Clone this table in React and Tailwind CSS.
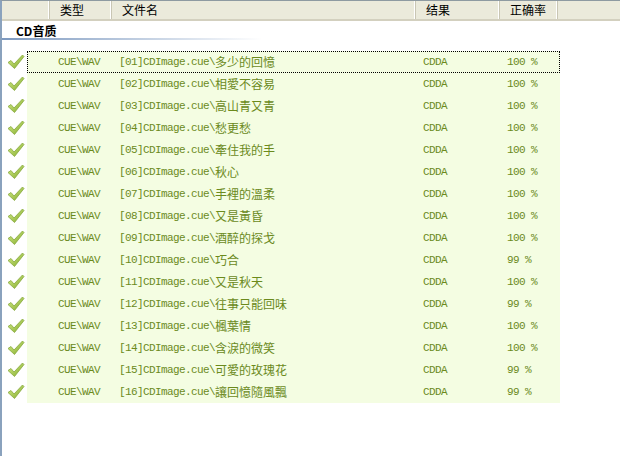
import React from "react";

const rows = [
  ["01", "多少的回憶", "100 %"],
  ["02", "相愛不容易", "100 %"],
  ["03", "高山青又青", "100 %"],
  ["04", "愁更愁", "100 %"],
  ["05", "牽住我的手", "100 %"],
  ["06", "秋心", "100 %"],
  ["07", "手裡的溫柔", "100 %"],
  ["08", "又是黃昏", "100 %"],
  ["09", "酒醉的探戈", "100 %"],
  ["10", "巧合", "99 %"],
  ["11", "又是秋天", "100 %"],
  ["12", "往事只能回味", "99 %"],
  ["13", "楓葉情", "100 %"],
  ["14", "含淚的微笑", "100 %"],
  ["15", "可愛的玫瑰花", "99 %"],
  ["16", "讓回憶隨風飄", "99 %"],
];

const mono = { fontFamily: '"Liberation Mono", monospace' };

const Check = () => (
  <svg width="18" height="16" viewBox="0 0 18 16">
    <defs>
      <linearGradient id="ck" x1="0" y1="0" x2="1" y2="1">
        <stop offset="0" stopColor="#d8ef8a" />
        <stop offset="1" stopColor="#7fa82a" />
      </linearGradient>
    </defs>
    <path
      d="M1 8.5 L4 6.5 L7 10 L15.5 1 L17 2.5 L7.5 14.5 Z"
      fill="url(#ck)"
      stroke="#86a83c"
      strokeWidth="0.8"
      strokeLinejoin="round"
    />
  </svg>
);

const HeadCell = ({ w, children }) => (
  <div
    className={`${w} h-full flex items-center pl-[10px] border-r border-r-[#c9c6b4] shadow-[inset_-1px_0_0_#ffffff]`}
  >
    {children}
  </div>
);

export default function App() {
  return (
    <div
      className="w-[620px] h-[456px] bg-white border-l-2 border-l-[#8aa2bd] border-t border-t-[#8e9aa1] overflow-hidden"
      style={{ fontFamily: '"Noto Sans CJK SC", "Liberation Sans", sans-serif' }}
    >
      <div className="h-[20px] flex bg-[#ebeadb] border-b-2 border-b-[#d3d0bf] text-[12px] text-black">
        <HeadCell w="w-[48px]"></HeadCell>
        <HeadCell w="w-[62px]">类型</HeadCell>
        <HeadCell w="w-[304px]">文件名</HeadCell>
        <HeadCell w="w-[84px]">结果</HeadCell>
        <HeadCell w="w-[58px]">正确率</HeadCell>
      </div>

      <div className="pl-[14px] pt-[2px] h-[16px] text-[12px] font-bold text-black leading-[16px]">
        CD音质
      </div>
      <div className="mt-[1px] h-[2px] w-[260px] bg-gradient-to-r from-[#7d99bf] to-white" />

      <div className="mt-[11px]">
        {rows.map(([n, name, pct], i) => (
          <div key={n} className="h-[22px] flex items-center">
            <div className="w-[25px] shrink-0 flex justify-center pl-[2px]">
              <Check />
            </div>
            <div
              className={`w-[533px] h-full flex items-center bg-[#f4fde2] text-[#6b8a1c] ${
                i === 0 ? "outline outline-1 outline-dotted outline-black -outline-offset-1" : ""
              }`}
            >
              <div className="w-[92px] shrink-0 pl-[31px] text-[11px] tracking-[-0.6px] whitespace-nowrap" style={mono}>
                CUE\WAV
              </div>
              <div className="w-[304px] shrink-0 text-[12px] whitespace-nowrap flex items-center">
                <span className="text-[11px] tracking-[-0.6px]" style={mono}>
                  [{n}]CDImage.cue\
                </span>
                <span>{name}</span>
              </div>
              <div className="w-[84px] shrink-0 text-[11px] tracking-[-0.6px]" style={mono}>
                CDDA
              </div>
              <div className="text-[11px] tracking-[-0.6px] whitespace-nowrap" style={mono}>
                {pct}
              </div>
            </div>
          </div>
        ))}
      </div>
    </div>
  );
}
